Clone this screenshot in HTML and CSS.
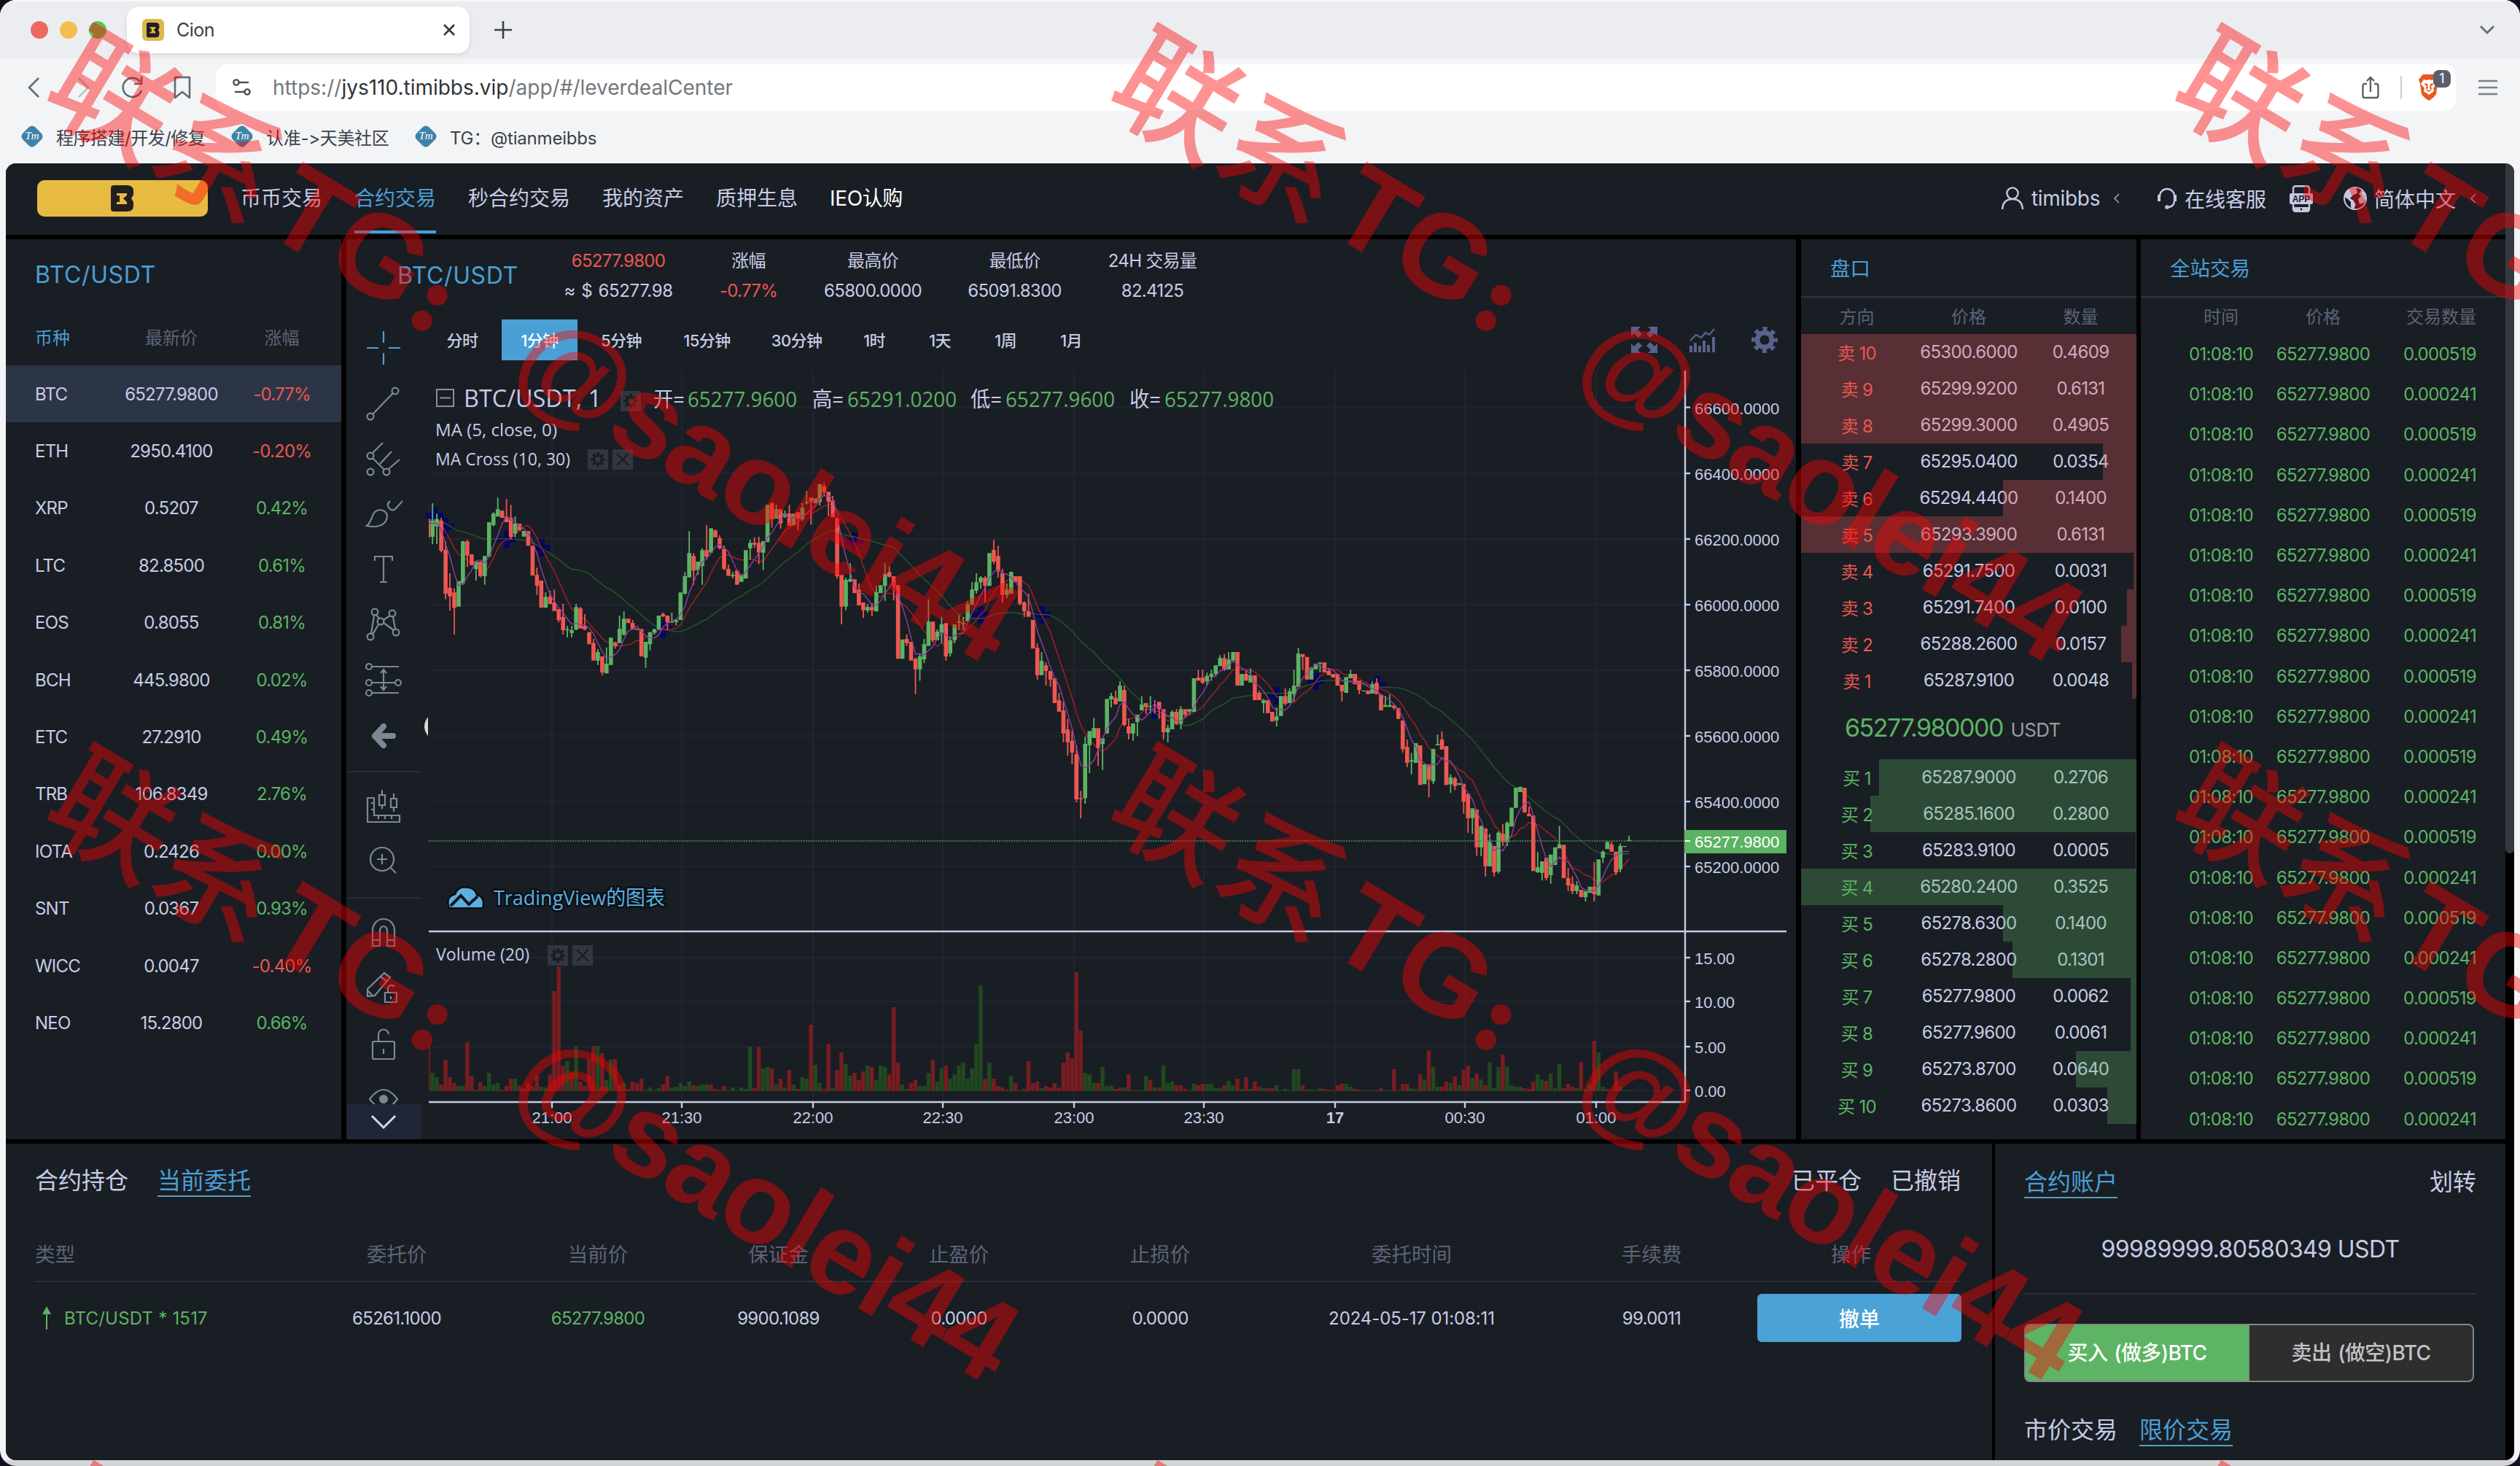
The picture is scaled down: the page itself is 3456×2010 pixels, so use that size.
FILE: index.html
```
<!DOCTYPE html>
<html lang="zh">
<head>
<meta charset="UTF-8">
<title>Cion</title>
<link rel="stylesheet" href="styles.css">
</head>
<body>
<svg class="defs" width="0" height="0">
	<symbol id="logoB" viewBox="0 0 32 36">
		<path fill="#231f20" fill-rule="evenodd" d="M0 4Q0 0 4 0H22Q31 0 31 8V13L28 18L31 23V28Q31 36 22 36H4Q0 36 0 32ZM8 11H22V14L17 18L22 23V26H8V23H12V14H8Z"/>
	</symbol>
	<symbol id="gear" viewBox="-12 -12 24 24">
		<circle r="6.6" fill="none" stroke="currentColor" stroke-width="4.4"/>
		<circle r="10" fill="none" stroke="currentColor" stroke-width="4" stroke-dasharray="3.93 3.93" stroke-dashoffset="1.96"/>
	</symbol>
	<symbol id="tm" viewBox="0 0 30 30">
		<path d="M11 2Q15 -1 19 2L28 11Q31 15 28 19L19 28Q15 31 11 28L2 19Q-1 15 2 11Z" fill="#3f83a8"/>
	</symbol>
</svg>
<div class="window">
	<div class="tabbar">
		<i class="light red"></i><i class="light yellow"></i><i class="light green"></i>
		<div class="tab">
			<span class="favicon"><svg width="18" height="22"><use href="#logoB"/></svg></span>
			<span class="tab-title">Cion</span>
			<svg class="tab-close" width="16" height="16" viewBox="0 0 16 16"><path d="M1 1L15 15M15 1L1 15" stroke="#33363b" stroke-width="2.6"/></svg>
		</div>
		<svg class="tab-new" width="24" height="24" viewBox="0 0 24 24"><path d="M12 0V24M0 12H24" stroke="#3c4046" stroke-width="2.6"/></svg>
		<svg class="tab-list" width="22" height="14" viewBox="0 0 22 14"><path d="M2 2L11 11L20 2" fill="none" stroke="#66717c" stroke-width="3"/></svg>
	</div>
	<div class="toolbar">
		<svg class="nav-icons" width="232" height="32" viewBox="0 0 232 32" fill="none" stroke="#5f6b76" stroke-width="2.6">
			<path d="M17 3L4 16L17 29"/>
			<path d="M72 3L85 16L72 29" stroke="#b9c2ca"/>
			<path d="M156 8A13 13 0 1 0 158 20M158 1V11H148"/>
			<path d="M204 2H224V30L214 22L204 30Z" stroke-linejoin="round"/>
		</svg>
		<div class="url">
			<svg width="26" height="24" viewBox="0 0 26 24" fill="none" stroke="#4a4f55" stroke-width="2.4"><circle cx="5" cy="5" r="3.6"/><path d="M9 5H22"/><circle cx="20" cy="18" r="3.6"/><path d="M3 18H16"/></svg>
			<span class="addr">https://<b>jys110.timibbs.vip</b>/app/#/leverdealCenter</span>
			<svg class="share" width="24" height="32" viewBox="0 0 24 32" fill="none" stroke="#5c6066" stroke-width="2.4"><path d="M7 11H4Q1.5 11 1.5 14V27Q1.5 30 4 30H20Q22.5 30 22.5 27V14Q22.5 11 20 11H17M12 22V2M7 7L12 2L17 7"/></svg>
			<i class="vr"></i>
			<span class="brave">
				<svg width="30" height="36" viewBox="0 0 30 36"><path fill="#e8591f" d="M7 0H23L29 7L27 13L25 27Q22 32 15 36Q8 32 5 27L3 13L1 7Z"/><path fill="#fff" d="M8 7L12 8L15 7L18 8L22 7L26 13L21 19L22 23L15 28L8 23L9 19L4 13Z"/><path fill="#e8591f" d="M9 12L13 13L14 19L11 21L15 24L19 21L16 19L17 13L21 12L20 15L18 16L19 20L15 22L11 20L12 16L10 15Z"/></svg>
				<em>1</em>
			</span>
		</div>
		<svg class="menu" width="26" height="22" viewBox="0 0 26 22"><path d="M0 2H26M0 11H26M0 20H26" stroke="#76808b" stroke-width="2.6"/></svg>
	</div>
	<div class="bookmarks">
		<a><span class="tm"><svg width="30" height="30"><use href="#tm"/></svg><em>Tm</em></span><span class="bm1">程序搭建/开发/修复</span></a>
		<a><span class="tm"><svg width="30" height="30"><use href="#tm"/></svg><em>Tm</em></span><span class="bm2">认准-&gt;天美社区</span></a>
		<a><span class="tm"><svg width="30" height="30"><use href="#tm"/></svg><em>Tm</em></span><span class="bm3">TG：@tianmeibbs</span></a>
	</div>

	<div class="page">
	<div class="app">
		<div class="header">
			<div class="logo"><svg width="32" height="36"><use href="#logoB"/></svg></div>
			<div class="nav">
				<a>币币交易</a><a class="on">合约交易</a><a>秒合约交易</a><a>我的资产</a><a>质押生息</a><a class="ieo">IEO认购</a>
			</div>
			<div class="user">
				<svg width="32" height="32" viewBox="0 0 32 32" fill="none" stroke="#c5c8e3" stroke-width="2.4"><circle cx="16" cy="9" r="7.6"/><path d="M2 31Q3 17 16 17Q29 17 30 31"/></svg>
				<span class="uname">timibbs</span>
				<svg width="8" height="14" viewBox="0 0 8 14"><path d="M7 1L1 7L7 13" fill="none" stroke="#9a9db4" stroke-width="1.6"/></svg>
			</div>
			<div class="service">
				<svg width="28" height="30" viewBox="0 0 28 30" fill="none" stroke="#c5c8e3" stroke-width="2.4"><path d="M4 12A10 10 0 0 1 24 12V19Q23 27 15 27"/><path d="M3 10V19M25 10V19" stroke-width="4"/><circle cx="14" cy="27" r="1.6"/></svg>
				<span>在线客服</span>
			</div>
			<svg class="appicon" width="32" height="37" viewBox="0 0 32 37"><rect x="5" y="1.2" width="22" height="34.6" rx="3" fill="none" stroke="#c5c8e3" stroke-width="2.4"/><rect x="5" y="30" width="22" height="6" fill="#c5c8e3"/><rect y="11" width="32" height="15" rx="2" fill="#c5c8e3"/><text x="16" y="23" font-size="12" font-weight="700" text-anchor="middle" font-family="Liberation Sans" fill="#191e24">APP</text><circle cx="16" cy="33" r="1.4" fill="#191e24"/></svg>
			<div class="lang">
				<svg width="32" height="32" viewBox="0 0 32 32"><circle cx="16" cy="16" r="15" fill="none" stroke="#c5c8e3" stroke-width="2"/><path fill="#c5c8e3" d="M16 1Q4 1 1 14L6 17L10 21V28L14 31L17 24L14 19L9 16L14 11L19 9L18 3ZM24 5L21 10L24 13L20 17L22 24L28 22L30 17L29 9Z"/></svg>
				<span>简体中文</span>
				<svg width="8" height="14" viewBox="0 0 8 14"><path d="M7 1L1 7L7 13" fill="none" stroke="#9a9db4" stroke-width="1.6"/></svg>
			</div>
		</div>

		<div class="top">
			<div class="panel market">
				<h3>BTC/USDT</h3>
				<div class="mrow mhead"><span class="on">币种</span><span>最新价</span><span>涨幅</span></div>
				<div id="market"></div>
			</div>

			<div class="panel kline">
				<div class="stats">
					<h3>BTC/USDT</h3>
					<div class="st st1"><p class="down">65277.9800</p><p class="usd">≈ $ 65277.98</p></div>
					<div class="st st2"><p>涨幅</p><p class="down">-0.77%</p></div>
					<div class="st st3"><p>最高价</p><p>65800.0000</p></div>
					<div class="st st4"><p>最低价</p><p>65091.8300</p></div>
					<div class="st st5"><p>24H 交易量</p><p>82.4125</p></div>
				</div>
				<div class="kbody">
					<div class="tools">
						<svg viewBox="0 0 48 48" class="cur"><path d="M24 1V17M24 31V47M1 24H17M31 24H47"/></svg>
						<svg viewBox="0 0 48 48"><circle cx="40" cy="7" r="4.4"/><circle cx="6" cy="42" r="4.4"/><path d="M37 10L9 39"/></svg>
						<svg viewBox="0 0 48 48"><circle cx="6" cy="20" r="4.4"/><circle cx="6" cy="42" r="4.4"/><circle cx="28" cy="42" r="4.4"/><path d="M9 16L23 2M9 23L25 39M19 31L35 14M31 38L46 25"/></svg>
						<svg viewBox="0 0 48 48"><path d="M1 40Q4 38 8 29Q11 18 19 18Q28 19 29 26Q28 40 12 41Q5 41 1 40ZM33 6Q29 9 30 13Q34 21 40 17L50 6"/></svg>
						<svg viewBox="0 0 48 48"><path d="M12 12V6H36V12M24 6V41M19 41H29"/></svg>
						<svg viewBox="0 0 48 48"><circle cx="12" cy="6" r="4.4"/><circle cx="36" cy="8" r="4.4"/><circle cx="20" cy="19" r="4.4"/><circle cx="6" cy="40" r="4.4"/><circle cx="41" cy="34" r="4.4"/><path d="M14 10L18 15M33 11L24 17M7 36L11 11M9 37L17 23M24 21L38 31M37 13L40 29"/></svg>
						<svg viewBox="0 0 48 48"><circle cx="4" cy="5" r="4"/><circle cx="4" cy="27" r="4"/><circle cx="44" cy="27" r="4"/><circle cx="4" cy="41" r="4"/><path d="M8 5H45M8 27H40M8 41H45M24 10V36M20 14L24 9L28 14M20 32L24 37L28 32"/></svg>
						<svg viewBox="0 0 48 48"><path class="fat" d="M37 24H12M24 11L12 24L24 37"/></svg>
						<i></i>
						<svg viewBox="0 0 48 48"><path d="M2 12H11V36H46V45H2ZM18 8H26V22H18ZM22 1V8M22 22V27M34 13H42V25H34ZM38 6V13M38 25V31M11 19H7M11 28H7M17 41V37M26 41V37M35 41V37"/></svg>
						<svg viewBox="0 0 48 48"><circle cx="22" cy="20" r="16"/><path d="M22 13V27M15 20H29M34 32L41 39"/></svg>
						<i></i>
						<svg viewBox="0 0 48 48"><path d="M9 42V20A15 15 0 0 1 39 20V42H29V21A5 6 0 0 0 19 21V42ZM9 34H19M29 34H39"/></svg>
						<svg viewBox="0 0 48 48"><path d="M25 3L33 9L12 34L2 35V25ZM20 8L28 14M2 27L10 35M26 30H42V43H26ZM30 30V24A5 5 0 0 1 39 22M34 35V39"/></svg>
						<svg viewBox="0 0 48 48"><rect x="9" y="21" width="30" height="24" rx="2"/><path d="M17 21V12A7 7 0 0 1 31 11M24 31V38" /></svg>
						<svg viewBox="0 0 48 48"><path d="M5 24Q24 -2 43 24Q24 50 5 24Z"/><circle class="dot" cx="24" cy="24" r="5"/></svg>
						<b><svg viewBox="0 0 48 48"><path d="M8 16L24 32L40 16"/></svg></b>
					</div>
					<div class="chartcol">
						<div class="intervals">
							<a class="w2">分时</a><a class="w3 on">1分钟</a><a class="w3">5分钟</a><a class="w4">15分钟</a><a class="w4">30分钟</a><a class="w1">1时</a><a class="w1">1天</a><a class="w1">1周</a><a class="w1">1月</a>
							<span class="acts">
								<svg width="36" height="36" viewBox="0 0 36 36" fill="#58628c"><path d="M0 0H13L9 4L15 10L10 15L4 9L0 13ZM36 0V13L32 9L26 15L21 10L27 4L23 0ZM0 36V23L4 27L10 21L15 26L9 32L13 36ZM36 36H23L27 32L21 26L26 21L32 27L36 23Z"/></svg>
								<svg width="36" height="34" viewBox="0 0 36 34"><path fill="#58628c" d="M0 25H4V34H0ZM6 21H10V34H6ZM12 25H16V34H12ZM18 18H22V34H18ZM24 24H28V34H24ZM31 13H35V34H31Z"/><path d="M1 18L9 10L16 14L22 7L27 10L34 2" fill="none" stroke="#58628c" stroke-width="2.4"/></svg>
								<svg class="cog" width="36" height="36"><use href="#gear"/></svg>
							</span>
						</div>
						<svg id="chart" viewBox="578 494 1885 1068" width="1885" height="1068"></svg>
					</div>
				</div>
			</div>

			<div class="panel book">
				<h4>盘口</h4>
				<div class="brow bhead"><span>方向</span><span>价格</span><span>数量</span></div>
				<div id="asks"></div>
				<div class="last"><b>65277.980000</b> <span>USDT</span></div>
				<div id="bids"></div>
			</div>

			<div class="panel trades">
				<h4>全站交易</h4>
				<div class="trow thead"><span>时间</span><span>价格</span><span>交易数量</span></div>
				<div id="trades"></div>
			</div>
		</div>

		<div class="bottom">
			<div class="panel orders">
				<div class="otabs"><a>合约持仓</a><a class="on">当前委托</a><a class="right">已平仓</a><a>已撤销</a></div>
				<div class="orow ohead"><span>类型</span><span>委托价</span><span>当前价</span><span>保证金</span><span>止盈价</span><span>止损价</span><span>委托时间</span><span>手续费</span><span>操作</span></div>
				<div class="orow">
					<span class="up pair"><svg width="14" height="32" viewBox="0 0 14 32"><path d="M7 32V8" stroke="#5cb363" stroke-width="2"/><path d="M7 0L13 11H1Z" fill="#5cb363"/></svg>BTC/USDT * 1517</span>
					<span>65261.1000</span><span class="up">65277.9800</span><span>9900.1089</span><span>0.0000</span><span>0.0000</span><span class="date">2024-05-17 01:08:11</span><span>99.0011</span>
					<span class="op"><button>撤单</button></span>
				</div>
			</div>
			<div class="panel account">
				<div class="otabs"><a class="on">合约账户</a><a class="right">划转</a></div>
				<div class="balance">99989999.80580349 USDT</div>
				<div class="sides"><a class="buy">买入 (做多)BTC</a><a>卖出 (做空)BTC</a></div>
				<div class="otabs kinds"><a>市价交易</a><a class="on">限价交易</a></div>
			</div>
		</div>
	</div>
	<div class="scroll"><i></i></div>
	</div>
</div>

<!-- watermark over the whole window -->
<svg class="mark" width="3456" height="2010" viewBox="0 0 3456 2010">
	<defs>
		<g id="wm" transform="translate(357 315) rotate(31)">
			<text x="-350" y="8" class="cjk" font-size="168">联系</text>
			<text x="0" y="0" font-size="160">TG</text>
			<text x="233" y="0" class="colon" font-size="85">：</text>
			<text x="394" y="0" font-size="160" textLength="769">@saolei44</text>
		</g>
	</defs>
	<use href="#wm"/><use href="#wm" x="1459"/><use href="#wm" x="2918"/>
	<use href="#wm" y="986"/><use href="#wm" x="1459" y="986"/><use href="#wm" x="2918" y="986"/>
	<use href="#wm" y="1972"/><use href="#wm" x="1459" y="1972"/><use href="#wm" x="2918" y="1972"/>
</svg>
<script src="app.js"></script>
</body>
</html>
```
FILE: styles.css
```
* { box-sizing: border-box; }
body {
	margin: 0;
	width: 3456px;
	height: 2010px;
	overflow: hidden;
	background: #12101f;
	font-family: Inter, "Noto Sans CJK SC", sans-serif;
	font-size: 24px;
	color: #c8cbe6;
}
h3, h4, p { margin: 0; font-weight: 400; }
b, em, i { font-weight: 400; font-style: normal; }
a { white-space: nowrap; }
.defs { display: block; position: absolute; }
.window {
	height: 2010px;
	background: linear-gradient(#f2f4f6 2002px, #d3d4d6 2002px);
	border-radius: 22px;
	overflow: hidden;
}

/* browser chrome */
.tabbar {
	height: 80px;
	background: #ebedf1;
	display: flex;
	align-items: center;
	padding: 0 34px 0 42px;
	border-top: 2px solid #f7f8fa;
}
.light { width: 24px; height: 24px; border-radius: 50%; margin-right: 16px; }
.light.red { background: #ec695e; }
.light.yellow { background: #f4be4f; }
.light.green { background: #5fc454; }
.tab {
	width: 470px;
	height: 64px;
	margin-left: 12px;
	background: #fff;
	border-radius: 16px;
	box-shadow: 0 2px 6px rgba(0, 0, 0, .1);
	display: flex;
	align-items: center;
	padding: 0 20px 0 21px;
}
.favicon {
	width: 30px;
	height: 30px;
	border-radius: 6px;
	background: #dcb94a;
	display: flex;
	align-items: center;
	justify-content: center;
}
.tab-title { margin-left: 17px; font-size: 25px; color: #3b3f45; letter-spacing: -.5px; }
.tab-close { margin-left: auto; }
.tab-new { margin-left: 34px; }
.tab-list { margin-left: auto; }
.toolbar { height: 80px; display: flex; align-items: center; padding: 0 31px 0 36px; }
.url {
	flex: 1;
	height: 64px;
	margin: 0 31px 0 28px;
	padding: 0 22px 0 23px;
	background: #fff;
	border-radius: 16px;
	display: flex;
	align-items: center;
}
.addr { margin-left: 29px; font-size: 28px; color: #73777c; }
.addr b { color: #2f3338; }
.share { margin-left: auto; }
.vr { width: 2px; height: 32px; background: #c9cbce; margin: 0 22px 0 29px; }
.brave { position: relative; height: 36px; width: 30px; }
.brave em {
	position: absolute;
	left: 21px;
	top: -6px;
	width: 24px;
	height: 24px;
	border-radius: 8px;
	background: #5a5f70;
	color: #fff;
	font-size: 18px;
	line-height: 24px;
	text-align: center;
}
.bookmarks {
	height: 64px;
	padding: 0 0 10px 29px;
	display: flex;
	align-items: center;
	gap: 35px;
	color: #3c4147;
}
.bookmarks a { display: flex; align-items: center; gap: 18px; }
.tm { position: relative; width: 30px; height: 30px; }
.tm svg { display: block; }
.tm em {
	position: absolute;
	left: 0;
	top: 0;
	width: 30px;
	line-height: 29px;
	text-align: center;
	font: italic 15px/29px "Liberation Serif", serif;
	color: #fff;
}
.bm1 { width: 205px; letter-spacing: -.5px; }
.bm2 { width: 169px; letter-spacing: -.3px; }
.bm3 { letter-spacing: -.2px; }

/* app */
.page { display: flex; padding-left: 8px; }
.app { width: 3428px; height: 1778px; background: #000; border-radius: 14px 0 0 14px; overflow: hidden; }
.scroll { width: 12px; height: 1778px; background: #000; border-radius: 0 12px 12px 0; overflow: hidden; }
.scroll i { display: block; height: 946px; background: #343941; border-radius: 0 12px 6px 6px; }
.panel { background: #191e24; }
.header {
	height: 98px;
	background: #191e24;
	display: flex;
	align-items: center;
	padding: 0 40px 2px 43px;
	font-size: 28px;
}
.logo {
	width: 234px;
	height: 50px;
	border-radius: 10px;
	background: #e7bb41;
	display: flex;
	align-items: center;
	justify-content: center;
}
.nav { display: flex; gap: 44px; margin-left: 45px; height: 96px; }
.nav a { line-height: 96px; }
.nav a.on { color: #4a9fd5; box-shadow: inset 0 -4px #4a9fd5; }
.nav a.ieo { color: #fff; letter-spacing: -.4px; }
.user, .service, .lang { display: flex; align-items: center; gap: 10px; }
.user { margin-left: auto; }
.user .uname { width: 103px; letter-spacing: -.3px; }
.service { margin-left: 51px; }
.appicon { margin-left: 32px; }
.lang { margin-left: 42px; }
.lang span { margin-right: 10px; }

.top { display: flex; gap: 6px; margin-top: 6px; height: 1234px; }
.up { color: #5cb363; }
.down { color: #ec5650; }

.market { width: 460px; }
h3 { color: #4a9fd5; font-size: 32px; letter-spacing: .6px; }
.market h3 { height: 98px; line-height: 98px; padding-left: 40px; }
.mrow {
	height: 78.4px;
	padding-left: 40px;
	display: grid;
	grid-template-columns: 97px 180px 123px;
	align-items: center;
	text-align: center;
	letter-spacing: -.8px;
}
.mrow span:first-child { text-align: left; }
.mrow.sel { background: #2c3546; }
.mhead { height: 75px; padding-bottom: 4px; color: #5d6377; letter-spacing: 0; }
.mhead .on { color: #4a9fd5; }

.kline { width: 1988px; margin-left: 1px; }
.stats { height: 102px; display: flex; padding: 0 0 2px 70px; gap: 61px; align-items: center; }
.stats h3 { width: 166px; padding-bottom: 2px; }
.st { text-align: center; letter-spacing: -.7px; line-height: 41px; white-space: nowrap; }
.st .usd { letter-spacing: -.4px; word-spacing: 2px; }
.st1 { width: 152px; }
.st2 { width: 83px; }
.st3 { width: 136px; }
.st4 { width: 131px; }
.st5 { width: 125px; }
.kbody { display: flex; height: 1132px; }
.tools {
	width: 103px;
	padding-top: 9px;
	height: 1132px;
	overflow: hidden;
	position: relative;
	display: flex;
	flex-direction: column;
}
.tools svg {
	display: block;
	flex: none;
	width: 48px;
	height: 48px;
	margin: 14px 27px;
	overflow: visible;
	fill: none;
	stroke: #7d8896;
	stroke-width: 2.2;
}
.tools svg.cur { stroke: #4a9fd5; }
.tools .fat { stroke-width: 8; stroke-linecap: round; stroke-linejoin: round; }
.tools .dot { fill: #7d8896; }
.tools i { flex: none; height: 2px; margin: 10px 0 9px; background: #272c36; }
.tools b { position: absolute; left: 0; bottom: 0; width: 103px; height: 48px; background: #212636; }
.tools b svg { margin: 0 27px; stroke: #d5d8ea; stroke-width: 3; }
.chartcol { width: 1885px; }
.intervals {
	display: flex;
	gap: 8px;
	height: 64px;
	padding: 8px 25px 0 10px;
	font-size: 22px;
	font-weight: 500;
}
.intervals a { line-height: 58px; text-align: center; letter-spacing: -.6px; }
.intervals a.on { background: #4a9fd5; color: #fff; }
.w1 { width: 82px; }
.w2 { width: 92px; }
.w3 { width: 104px; }
.w4 { width: 115px; }
.acts { margin-left: auto; display: flex; gap: 44px; align-items: center; }
.cog { color: #58628c; margin-left: 5px; }
#chart { display: block; font-family: "Open Sans", "Noto Sans CJK SC", sans-serif; }
#chart .grid { stroke: #1f2433; stroke-width: 2; }
#chart .axis { stroke: #c8cbe6; stroke-width: 2.4; fill: none; }
#chart text { fill: #c8cbe6; }
#chart .num { font-family: "Liberation Sans", sans-serif; font-size: 22px; }
#chart .ma { fill: none; stroke-width: 1.4; }
#chart text.g { fill: #5cb363; }
#chart .tv { fill: #5bb0e2; stroke: #0c0f13; stroke-width: 5; paint-order: stroke; }

.book { width: 460px; margin-left: 1px; letter-spacing: -.7px; }
h4 { height: 80px; line-height: 80px; padding-left: 40px; font-size: 27.5px; color: #4a9fd5; border-bottom: 2px solid #2f3541; letter-spacing: 0; }
.brow {
	position: relative;
	height: 50px;
	padding-bottom: 2px;
	display: grid;
	grid-template-columns: 153px 154px 153px;
	align-items: center;
	text-align: center;
}
.brow i { position: absolute; right: 0; top: 0; height: 50px; }
.ask i { background: rgba(235, 90, 90, .3); }
.bid i { background: rgba(92, 178, 96, .3); }
.bhead, .thead { color: #5d6377; letter-spacing: 0; }
.last { height: 83px; line-height: 80px; padding-left: 60px; color: #9b9ca3; font-size: 26px; }
.last b { color: #5cb363; font-size: 34px; letter-spacing: -1.5px; margin-right: 4px; }
.trades { width: 500px; letter-spacing: -.7px; }
.trow {
	height: 55.2px;
	margin: 0 40px;
	display: grid;
	grid-template-columns: 140px 140px 140px;
	align-items: center;
	text-align: center;
	color: #5cb363;
}
.trow span:last-child { text-align: right; }
.trow.thead { height: 50px; padding-bottom: 2px; color: #5d6377; }

.bottom { display: flex; gap: 4px; margin-top: 6px; height: 434px; }
.orders { width: 2724px; padding: 0 43px 0 40px; }
.otabs { height: 103px; display: flex; font-size: 32px; align-items: center; gap: 40px; }
.otabs a { padding: 8px 0 4px; line-height: 32px; border-bottom: 2px solid transparent; }
.otabs a.on { color: #4a9fd5; border-color: #5b9dbd; }
.otabs .right { margin-left: auto; }
.orders .otabs { height: 101px; padding-bottom: 1px; }
.orow {
	display: grid;
	grid-template-columns: 358px 276px 276px 219px 276px 276px 414px 244px 303px;
	height: 98px;
	align-items: center;
	text-align: center;
	letter-spacing: -.7px;
}
.orow span:first-child { text-align: left; }
.orow.ohead { height: 89px; padding-top: 10px; font-size: 27.5px; letter-spacing: 0; color: #5d6377; border-bottom: 2px solid #2a2f39; }
.orow .pair { display: flex; align-items: center; gap: 17px; padding-left: 9px; letter-spacing: .2px; }
.orow .date { letter-spacing: -.1px; }
.orow .op { text-align: right; }
button {
	width: 280px;
	height: 66px;
	border: 0;
	border-radius: 6px;
	background: #4ba2d7;
	color: #fff;
	font: 500 28px Inter, "Noto Sans CJK SC", sans-serif;
}
.account { width: 700px; padding: 0 40px; }
.balance { height: 104px; line-height: 84px; font-size: 32px; letter-spacing: -.6px; text-align: center; border-bottom: 2px solid #2a2f39; }
.sides { display: flex; margin: 40px 3px 0 0; height: 80px; border: 2px solid #85878a; border-radius: 8px; overflow: hidden; font-size: 28px; letter-spacing: -.6px; word-spacing: 2px; font-weight: 500; color: #c3c3c6; background: #2e2e2e; }
.sides a { flex: 1; line-height: 76px; text-align: center; }
.sides .buy { background: #5db465; color: #fff; border-right: 1px solid #85878a; }
.kinds { gap: 30px; height: 108px; padding-top: 22px; }

.mark { position: absolute; left: 0; top: 0; fill: #ff0000; opacity: .42; font-family: "Liberation Sans", "Noto Sans CJK SC", sans-serif; font-weight: 700; }
.mark .cjk { font-family: "Noto Sans CJK SC", sans-serif; font-weight: 500; }
.mark .colon { font-family: "Noto Sans CJK SC", sans-serif; stroke: #ff0000; stroke-width: 12; stroke-linejoin: round; }
```
FILE: app.js
```
var market = [
	["BTC","65277.9800","-0.77%"],["ETH","2950.4100","-0.20%"],["XRP","0.5207","0.42%"],["LTC","82.8500","0.61%"],
	["EOS","0.8055","0.81%"],["BCH","445.9800","0.02%"],["ETC","27.2910","0.49%"],["TRB","106.8349","2.76%"],
	["IOTA","0.2426","0.00%"],["SNT","0.0367","0.93%"],["WICC","0.0047","-0.40%"],["NEO","15.2800","0.66%"]
];
document.getElementById("market").innerHTML = market.map(function(m, i) {
	return '<div class="mrow' + (i == 0 ? ' sel' : '') + '"><span>' + m[0] + '</span><span>' + m[1] +
		'</span><span class="' + (m[2][0] == "-" ? "down" : "up") + '">' + m[2] + '</span></div>';
}).join("");

// name, price, amount, depth %
var asks = [
	["卖 10","65300.6000","0.4609",100],["卖 9","65299.9200","0.6131",100],["卖 8","65299.3000","0.4905",100],
	["卖 7","65295.0400","0.0354",10],["卖 6","65294.4400","0.1400",39.7],["卖 5","65293.3900","0.6131",100],
	["卖 4","65291.7500","0.0031",0.9],["卖 3","65291.7400","0.0100",2.8],["卖 2","65288.2600","0.0157",4.5],
	["卖 1","65287.9100","0.0048",1.3]
];
var bids = [
	["买 1","65287.9000","0.2706",76.8],["买 2","65285.1600","0.2800",79.4],["买 3","65283.9100","0.0005",0.2],
	["买 4","65280.2400","0.3525",100],["买 5","65278.6300","0.1400",39.7],["买 6","65278.2800","0.1301",36.9],
	["买 7","65277.9800","0.0062",1.7],["买 8","65277.9600","0.0061",1.7],["买 9","65273.8700","0.0640",18.1],
	["买 10","65273.8600","0.0303",8.7]
];
function book(id, rows, cls, color) {
	document.getElementById(id).innerHTML = rows.map(function(r) {
		return '<div class="brow ' + cls + '"><span class="' + color + '">' + r[0] + '</span><span>' + r[1] +
			'</span><span>' + r[2] + '</span><i style="width:' + r[3] + '%"></i></div>';
	}).join("");
}
book("asks", asks, "ask", "down");
book("bids", bids, "bid", "up");

var t = "";
for (var i = 0; i < 20; i++) {
	t += '<div class="trow"><span>01:08:10</span><span>65277.9800</span><span>' + (i % 2 ? "0.000241" : "0.000519") + '</span></div>';
}
document.getElementById("trades").innerHTML = t;

/* candles: colour, body top, body bottom, [high, low]; thirds of a px below base */
var parts = [
{base: 640, rows: "r 215 290 145 305,g 222 288 150 318,g 215 245 193 318,r 222 345 210 352,r 342 522 305 545,r 498 533 438 592,r 517 580 500 690,g 470 575,g 307 480 305 485,r 307 365 300 412,r 360 405,g 390 420 390 468,r 390 450 390 455,g 367 450 367 485,g 228 370,g 192 240 187 245,g 175 205 127 205,r 180 210,r 205 228 133 228,r 210 288 157 298,g 234 275 204 290,r 234 262,g 264 287,r 264 325,r 325 448,r 445 490 415 527,r 468 580,g 535 580 517 580,r 535 565 510 565,r 558 593 505 593,r 585 630 585 640,r 618 672 563 690,g 668 672 655 702,g 672 684 655 702,g 577 670 565 672,r 582 665 577 665,r 655 670 607 672,r 680 730,r 725 797 708 797,g 762 797 750 815,r 780 845 780 858,g 810 850 743 850,g 703 815,r 722 738 720 748,g 667 725 612 725,g 625 690 595 695,r 625 643,r 643 668 630 670,r 665 671,r 667 780,g 720 785 720 827,g 680 730 680 755,g 668 682 665 690,g 612 670,r 605 615 600 618,r 612 640 612 670,g 636 641 600 641,g 630 638 625 652,g 517 630,g 450 522 432 525,g 355 455 265 455,r 367 427 355 485,g 390 425 390 445,g 343 408 335 485,r 343 370 240 382,g 253 353,r 260 290,r 293 335 282 340,r 337 420 325 425,r 420 448 403 450,g 445 449 433 458,r 427 485,g 445 473,g 343 460,g 313 335 300 382,r 313 320 290 333,r 313 353 288 400,g 307 353 305 425,g 157 310,r 150 215 145 250,g 175 213 157 213,r 175 233 175 255,g 193 205 180 210,r 193 243 157 243,g 193 240,r 187 215 187 262,g 168 215 150 223,g 145 150 100 155,r 127 143 127 238,g 130 150,g 72 145 70 160,r 80 105 67 118,r 103 143 103 203,r 138 208 120 208,r 210 450 210 460,r 445 575 445 648,g 465 575 455 590,g 462 472 397 475,r 463 520,r 505 570 480 570,r 558 590 558 622,g 577 590 565 600,r 577 590 560 615,g 515 595 490 595,g 487 520,g 440 490 397 552,r 433 452 408 455,r 450 490 450 550,r 487 790"},
{base: 720, rows: "g 470 550,r 468 485 450 497,r 480 557,r 550 593 545 695,g 540 593 530 640,g 490 552 468 568,g 397 497 305 497,r 397 473 397 480,g 438 473 428 473,g 408 443 378 485,r 403 540 403 557,g 473 527 458 540,g 408 473 408 485,g 397 402 370 432,g 402 407 378 432,g 325 395 313 395,g 265 328 235 328,g 235 270 198 282,g 215 235 210 262,r 217 250 210 318,g 115 250,r 102 150 60 160,r 127 190 85 215,r 198 287 180 318,g 265 287 240 300,g 192 282,r 210 235,r 210 323 210 330,r 318 355 313 378,r 355 377 283 377,r 390 508,r 505 617 487 635,g 558 617 522 617,r 577 600 565 660,r 600 635 600 665,r 630 732,r 720 767 690 767,r 762 857 725 893,r 840 893 797 948,r 887 935 845 983,r 942 1128 905 1140,r 1123 1127 1093 1206,g 900 1123 870 1146,g 847 905 847 1020,g 835 875 793 875,r 835 917 835 990,g 877 900 877 1007,g 715 857,g 703 717 690 750,r 710 737 680 737,g 660 725 642 725,r 678 822 660 828,r 828 857 797 882,g 815 857 815 887,g 780 810 780 868,g 738 762 703 762,r 732 748 732 778,g 744 748 703 775,r 738 742 720 775,r 727 757 727 797,r 757 852 757 882,g 835 852 822 893,g 768 840 762 840,r 768 817 757 822,g 757 817 745 840,r 757 780 757 792,g 757 767 757 780,g 630 768,r 627 640 595 640,r 627 648 595 653,g 620 642 607 658,g 612 623 595 640,g 577 612 577 623,g 547 580 535 580,r 547 595 530 600,g 553 593 522 593,g 522 557,r 522 660,g 612 660,r 612 640 600 640,g 618 647 590 647,r 618 720,r 690 720 680 720,g 720 732 715 773,r 720 773,r 768 808,g 787 803 750 828,g 703 785,r 703 735 672 742,g 683 732 672 732,g 660 695 595 725,g 528 665 505 665,r 530 542 530 595,r 542 635,g 588 635 583 635,g 570 593,g 565 570 565 605,r 565 605,r 600 617 588 617,r 612 627,r 612 660,r 657 683 657 725,g 625 690,g 612 630 595 630,r 612 655,r 640 678 640 695,g 680 684,r 680 695,g 655 693 643 693,r 648 695 630 695,r 697 762,g 740 748 703 748,g 740 748 697 748,r 742 752 740 760,r 752 797,r 803 922 803 935,r 912 978 882 995,g 967 972 937 1025,g 897 978,r 906 1069,g 984 1066,r 984 1047 984 1120,g 920 1054 920 1065,g 901 906 862 906,r 882 923 848 923,r 909 1069,g 1037 1066 1025 1102,r 1042 1073 1035 1090,g 1061 1069,r 1064 1138 1064 1187,r 1105 1205 1105 1265,g 1165 1205 1165 1270,r 1170 1325 1170 1360,g 1238 1325 1235 1362,r 1248 1403 1248 1445,g 1303 1403 1270 1403,r 1320 1428 1320 1445,g 1265 1425 1260 1433,r 1270 1303 1230 1320,g 1225 1305 1218 1320,g 1162 1240,g 1080 1163,g 1076 1098,r 1080 1182,r 1187 1198 1158 1198,r 1195 1423,g 1408 1428 1345 1430,g 1383 1430 1383 1462,r 1368 1452 1368 1462,g 1355 1440 1355 1475,g 1325 1398,g 1313 1330 1237 1330,r 1315 1452,r 1452 1482 1410 1505,r 1475 1505 1445 1518,g 1482 1505 1465 1518,r 1500 1530,g 1505 1530 1505 1548,g 1487 1513,r 1487 1518 1385 1548,g 1375 1523,g 1343 1368 1338 1390,g 1303 1333,r 1313 1343 1303 1343,r 1343 1428 1343 1440,g 1320 1415 1310 1428,g 1320 1324,g 1295 1300 1277 1300"}
];
// volume bar heights, negative = falling bar
var vol = [-61,24,18,-8,-42,-18,-10,6,6,-66,-20,1,-11,6,24,8,10,-1,-6,-16,16,-6,2,-10,-6,-20,5,4,-22,-136,-170,-34,40,-24,61,-12,-6,-42,-61,61,-51,14,42,-43,-8,10,-2,-12,-10,-16,0,4,0,3,-8,-20,4,5,10,6,12,-7,6,8,8,-8,-2,0,-6,0,4,0,4,2,60,-3,-60,30,32,-30,8,-16,4,-28,8,-2,18,16,-90,35,10,-2,-64,3,-28,-52,36,20,-24,-14,-26,34,-32,14,34,32,-22,-114,-38,8,2,-10,-14,6,6,24,-42,12,30,-34,16,22,34,38,16,30,64,144,-16,38,-16,-6,-4,-1,20,-10,0,-2,-40,-10,-12,3,-6,-4,-10,-4,-38,-52,-44,-162,-82,24,22,10,-10,32,6,7,-2,-4,4,-22,0,0,0,20,-14,4,-4,34,10,
	12,-7,-7,-2,0,9,-7,-9,9,9,3,3,-7,13,7,-16,2,-18,2,-12,-5,3,-3,-3,7,0,2,0,29,29,-7,1,1,0,3,-2,-1,0,-7,-9,9,5,-2,-1,0,0,0,0,-3,0,0,-29,0,-9,-9,3,2,-22,15,-55,32,5,-5,-12,10,-19,7,-28,-34,17,-23,15,-7,39,3,32,-49,33,7,5,5,-3,-2,-12,22,15,-13,23,3,36,-3,-9,-5,3,-39,2,9,-68,52,5,-2,0,-26,5,0,0];

function px(k) { return 587.2 + 5.967 * k; }
var s = "", candles = "", closes = [];

[558.5,649,739,829,919,1009,1099,1188,1313,1373,1435,1495].forEach(function(y) {
	s += '<path class="grid" d="M588 ' + y + 'H2311"/>';
});
var times = [[757,"21:00"],[935,"21:30"],[1115,"22:00"],[1293,"22:30"],[1473,"23:00"],[1651,"23:30"],[1831,"17"],[2009,"00:30"],[2189,"01:00"]];
times.forEach(function(d) {
	s += '<path class="grid" d="M' + d[0] + ' 508V1511"/>';
});

// moving average crossings
[[596,707],[611,722],[695,740],[743,751],[909,863],[1172,742],[1345,843],[1429,843],[1583,974],[1751,954],[1805,934],[1889,939]].forEach(function(c) {
	s += '<path fill="#07075c" d="M' + (c[0] - 4) + ' ' + (c[1] - 12) + 'h8v8h8v8h-8v8h-8v-8h-8v-8h8z"/>';
});

var k = 0;
parts.forEach(function(p) {
	p.rows.split(",").forEach(function(row) {
		var v = row.split(" "), x = px(k);
		var y = v.slice(1).map(function(n) { return p.base + n / 3; });
		var col = v[0] == "g" ? "#5cb363" : "#f05750";
		if (y.length < 4) { y[2] = y[0]; y[3] = y[1]; }
		candles += '<path fill="' + col + '" d="M' + (x - 2.8).toFixed(1) + ' ' + y[0].toFixed(1) + 'h5.6V' + y[1].toFixed(1) + 'h-5.6zM' +
			(x - 0.9).toFixed(1) + ' ' + y[2].toFixed(1) + 'h1.8V' + y[3].toFixed(1) + 'h-1.8z"/>';
		closes.push(v[0] == "g" ? y[0] : y[1]);
		k++;
	});
});
function ma(n, col) {
	var d = "";
	for (var i = 0; i < closes.length; i++) {
		var sum = 0;
		for (var j = 0; j < n; j++) sum += i - j >= 0 ? closes[i - j] : 712;
		d += (i ? "L" : "M") + px(i).toFixed(1) + " " + (sum / n).toFixed(1);
	}
	return '<path class="ma" stroke="' + col + '" d="' + d + '"/>';
}
s += '<clipPath id="plot"><rect x="588" y="500" width="1723" height="1000"/></clipPath><g clip-path="url(#plot)">';
s += ma(30, "#235a26") + ma(10, "#a81f25") + candles + ma(5, "#8f3f9e");
vol.forEach(function(h, i) {
	var a = Math.abs(h) + 1;
	s += '<rect x="' + (px(i) - 2.8).toFixed(1) + '" y="' + (1496 - a) + '" width="5.4" height="' + a + '" fill="' + (h < 0 ? "#791c20" : "#21481f") + '"/>';
});
s += '</g>';

s += '<path d="M588 1153H2311" stroke="#4b8f51" stroke-width="2" stroke-dasharray="2 1.4" opacity=".8"/>';
s += '<path class="axis" d="M588 1277H2450M588 1511H2311M2311 508V1511"/>';
times.forEach(function(d) {
	s += '<path class="axis" d="M' + d[0] + ' 1511v8"/><text class="num" x="' + d[0] + '" y="1540" text-anchor="middle"' +
		(d[1] == "17" ? ' font-weight="700"' : '') + '>' + d[1] + '</text>';
});
[[558.5,"66600.0000"],[649,"66400.0000"],[739,"66200.0000"],[829,"66000.0000"],[919,"65800.0000"],[1009,"65600.0000"],[1099,"65400.0000"],[1188,"65200.0000"],
[1313,"15.00"],[1373,"10.00"],[1435,"5.00"],[1495,"0.00"]].forEach(function(d) {
	s += '<path class="axis" d="M2311 ' + d[0] + 'h7"/><text class="num" x="2324" y="' + (d[0] + 9) + '">' + d[1] + '</text>';
});
s += '<rect x="2310" y="1138" width="140" height="32" fill="#5cb363"/><path d="M2311 1153h7" stroke="#fff" stroke-width="2"/><text class="num" x="2324" y="1162" style="fill:#fff">65277.9800</text>';

// legends
function box(x, y, close) {
	return '<rect x="' + x + '" y="' + y + '" width="28" height="28" fill="#33373d"/>' + (close ?
		'<path d="M' + (x + 6) + ' ' + (y + 6) + 'l16 16m0 -16l-16 16" stroke="#191e24" stroke-width="2.4"/>' :
		'<svg x="' + (x + 4) + '" y="' + (y + 4) + '" width="20" height="20" color="#191e24"><use href="#gear"/></svg>');
}
function txt(x, y, w, size, str, cls) {
	return '<text x="' + x + '" y="' + y + '" textLength="' + w + '" lengthAdjust="spacingAndGlyphs" font-size="' + size + '" class="' + (cls || "") + '">' + str + '</text>';
}
s += '<path d="M599 534H622V557H599ZM603 545.5H618" fill="none" stroke="#8a8f96" stroke-width="2"/>';
s += txt(636, 558, 189, 32, "BTC/USDT, 1") + box(851, 536);
s += txt(896, 558, 43, 29, "开=") + txt(943, 558, 150, 29, "65277.9600", "g");
s += txt(1114, 558, 43, 29, "高=") + txt(1162, 558, 150, 29, "65291.0200", "g");
s += txt(1331, 558, 43, 29, "低=") + txt(1379, 558, 150, 29, "65277.9600", "g");
s += txt(1549, 558, 43, 29, "收=") + txt(1597, 558, 150, 29, "65277.9800", "g");
s += txt(597, 598, 167, 24, "MA (5, close, 0)") + txt(597, 638, 185, 24, "MA Cross (10, 30)") + box(806, 616) + box(840, 616, 1);
s += txt(598, 1317, 128, 24, "Volume (20)") + box(751, 1296) + box(785, 1296, 1);
s += '<path class="tv" d="M617 1244Q612 1230 625 1227Q629 1215 642 1218Q651 1219 653 1228Q664 1230 661 1244Z"/><path d="M618 1242L632 1228L643 1240L655 1229" fill="none" stroke="#11161b" stroke-width="4"/>';
s += txt(677, 1241, 235, 28, "TradingView的图表", "tv");
s += '<path d="M587 983Q577 996 587 1009Z" fill="#d8d8d8"/>';
document.getElementById("chart").innerHTML = s;
```
